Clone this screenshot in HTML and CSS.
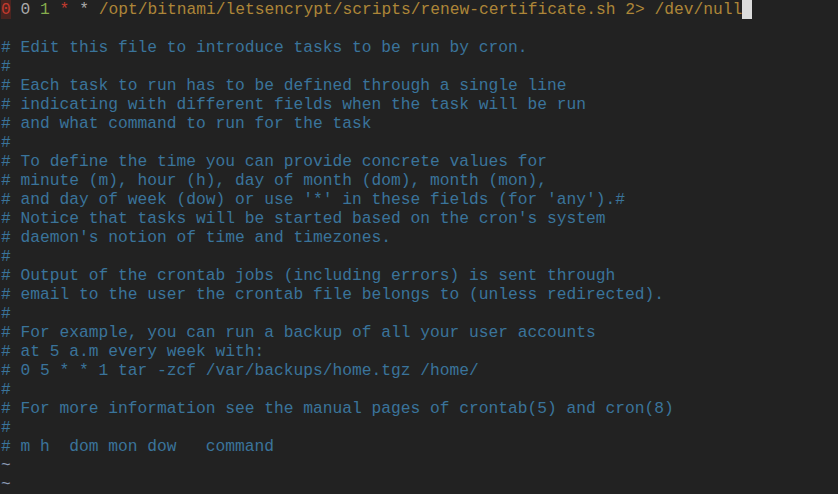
FILE: index.html
```html
<!DOCTYPE html>
<html>
<head>
<meta charset="utf-8">
<link rel="stylesheet" href="styles.css">
</head>
<body>
<pre class="term"><span class="hl-num">0</span> <span class="grey">0</span> <span class="green">1</span> <span class="red">*</span> <span class="grey">*</span> <span class="path">/opt/bitnami/letsencrypt/scripts/renew-certificate.sh 2&gt; /dev/null</span><span class="cursor"> </span>

<span class="c"># Edit this file to introduce tasks to be run by cron.</span>
<span class="c">#</span>
<span class="c"># Each task to run has to be defined through a single line</span>
<span class="c"># indicating with different fields when the task will be run</span>
<span class="c"># and what command to run for the task</span>
<span class="c">#</span>
<span class="c"># To define the time you can provide concrete values for</span>
<span class="c"># minute (m), hour (h), day of month (dom), month (mon),</span>
<span class="c"># and day of week (dow) or use '*' in these fields (for 'any').#</span>
<span class="c"># Notice that tasks will be started based on the cron's system</span>
<span class="c"># daemon's notion of time and timezones.</span>
<span class="c">#</span>
<span class="c"># Output of the crontab jobs (including errors) is sent through</span>
<span class="c"># email to the user the crontab file belongs to (unless redirected).</span>
<span class="c">#</span>
<span class="c"># For example, you can run a backup of all your user accounts</span>
<span class="c"># at 5 a.m every week with:</span>
<span class="c"># 0 5 * * 1 tar -zcf /var/backups/home.tgz /home/</span>
<span class="c">#</span>
<span class="c"># For more information see the manual pages of crontab(5) and cron(8)</span>
<span class="c">#</span>
<span class="c"># m h  dom mon dow   command</span>
<span class="tilde">~</span>
<span class="tilde">~</span>
</pre>
</body>
</html>
```
FILE: styles.css
```css
html, body {
  margin: 0;
  padding: 0;
  background: #222222;
  height: 100%;
  overflow: hidden;
}
.term {
  margin: 0;
  padding: 0 0 0 1px;
  font-family: "Liberation Mono", monospace;
  font-size: 16.25px;
  line-height: 19px;
  color: #3e7aa3;
  white-space: pre;
}
.hl-num {
  color: #c43a2e;
  background: #4a2420;
}
.grey { color: #a9a9a9; }
.green { color: #86ad4c; }
.red { color: #c23b2f; }
.path { color: #ad8638; }
.c { color: #3a749b; }
.tilde { color: #8c9cb6; }
.cursor {
  background: #dcdcdc;
}
```
